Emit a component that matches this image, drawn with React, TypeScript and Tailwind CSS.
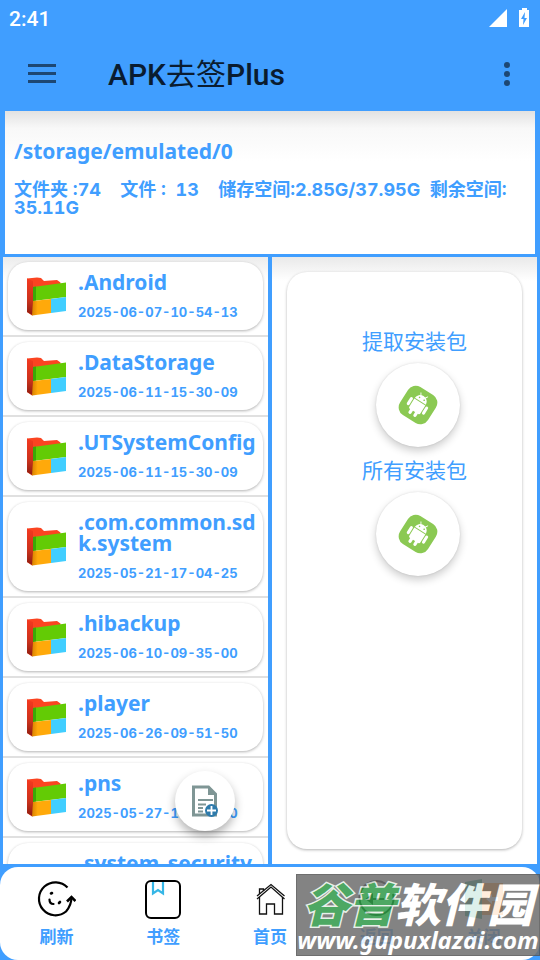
import React from "react";

const folders = [
  { name: ".Android", date: "2025-06-07-10-54-13" },
  { name: ".DataStorage", date: "2025-06-11-15-30-09" },
  { name: ".UTSystemConfig", date: "2025-06-11-15-30-09" },
  { name: ".com.common.sdk.system", date: "2025-05-21-17-04-25" },
  { name: ".hibackup", date: "2025-06-10-09-35-00" },
  { name: ".player", date: "2025-06-26-09-51-50" },
  { name: ".pns", date: "2025-05-27-10-12-00" },
  { name: ".system_security_config", date: "2025-06-07-10-54-13" },
];

function FolderIcon() {
  return (
    <svg width="40" height="40" viewBox="0 0 40 40" aria-hidden="true" className="shrink-0">
      <defs>
        <linearGradient id="spine" x1="0" y1="0" x2="0" y2="1">
          <stop offset="0" stopColor="#f5391f" />
          <stop offset="0.6" stopColor="#c9321c" />
          <stop offset="1" stopColor="#8c1c10" />
        </linearGradient>
        <linearGradient id="amber" x1="0" y1="0" x2="1" y2="0">
          <stop offset="0" stopColor="#d98200" />
          <stop offset="0.3" stopColor="#ffa90a" />
        </linearGradient>
      </defs>
      <path d="M0 1.500L10 .5l4 .5 3 3 13-1 3.500 2.500V10L7 19 5 38.500 0 35z" fill="#fb4421" />
      <path d="M0 1.500L6 4v34.500L0 35z" fill="url(#spine)" />
      <path d="M6 10L39 5.500V20L6 24z" fill="#63cb05" />
      <path d="M6 10l3-.5v14L6 24z" fill="#39a807" />
      <path d="M6 24l18-2v14L5 38.500z" fill="url(#amber)" />
      <path d="M24 22l15-2v14l-15 2z" fill="#41ceff" />
    </svg>
  );
}

function AndroidIcon() {
  return (
    <svg width="40" height="40" viewBox="0 0 40 40" aria-hidden="true">
      <g transform="rotate(32 20 20)">
        <rect x="3.500" y="3.500" width="33" height="33" rx="9" fill="#8bc953" />
        <g fill="#fff">
          <path d="M13.500 15.500a6.500 6 0 0 1 13 0z" />
          <path d="M13.500 16.500h13v9.500a1.500 1.500 0 0 1-1.500 1.500H15a1.500 1.500 0 0 1-1.500-1.500z" />
          <rect x="9.500" y="16.500" width="3" height="9" rx="1.500" />
          <rect x="27.500" y="16.500" width="3" height="9" rx="1.500" />
          <rect x="15.500" y="26" width="3.200" height="6" rx="1.500" />
          <rect x="21.300" y="26" width="3.200" height="6" rx="1.500" />
        </g>
        <path d="M16 8l1.500 2.500M24 8l-1.500 2.500" stroke="#fff" strokeWidth="0.900" strokeLinecap="round" />
        <circle cx="17.300" cy="12.700" r="0.800" fill="#8bc953" />
        <circle cx="22.700" cy="12.700" r="0.800" fill="#8bc953" />
      </g>
    </svg>
  );
}

function RefreshIcon() {
  return (
    <svg width="40" height="40" viewBox="0 0 40 40" fill="none" stroke="#000" aria-hidden="true">
      <path d="M31.500 8.500A16.500 16.500 0 1 0 30 32.500C33 29 35.500 24 35.500 18" strokeWidth="2.200" />
      <path d="M31 22.500l4.500-4.500 4 4" strokeWidth="2.600" />
      <path d="M13.500 20.500c0 3 1.500 4.500 4 4.500" strokeWidth="2.200" strokeLinecap="round" />
      <path d="M15 14.500l1-.5M23 24l1-1" strokeWidth="2.600" strokeLinecap="round" />
    </svg>
  );
}

function BookmarkIcon() {
  return (
    <svg width="40" height="40" viewBox="0 0 40 40" fill="none" aria-hidden="true">
      <path d="M10 3v11.500l5-3.500 5 3.500V3" stroke="#35b6e6" strokeWidth="2.200" />
      <rect x="3" y="2" width="34" height="37" rx="5" stroke="#000" strokeWidth="2" />
    </svg>
  );
}

function HomeIcon() {
  return (
    <svg width="40" height="40" viewBox="0 0 40 40" fill="none" stroke="#111" strokeWidth="1.300" aria-hidden="true">
      <path d="M7 20L21 8l13.500 12M7 17L21 5.500 34.500 17" />
      <path d="M9.500 18v17h7V25h8v10h8V18M9.500 15v-5h4v2" />
    </svg>
  );
}

function BackIcon() {
  return (
    <svg width="40" height="40" viewBox="0 0 40 40" fill="none" stroke="#111" strokeWidth="2" aria-hidden="true">
      <path d="M29 5A17 17 0 1 0 36 15" />
      <path d="M10 20h17M15 16l-5 4 5 4z" fill="#111" />
    </svg>
  );
}

function ExitIcon() {
  return (
    <svg width="40" height="40" viewBox="0 0 40 40" aria-hidden="true">
      <path d="M17 4h22v32H17z" fill="#ff8a1f" />
      <path d="M1 3l17-3v40L1 37z" fill="#1f9e7a" />
      <path d="M22 20l6-5v3h6v4h-6v3z" fill="#fff" />
    </svg>
  );
}

const tabs = [
  { label: "刷新", Icon: RefreshIcon },
  { label: "书签", Icon: BookmarkIcon },
  { label: "首页", Icon: HomeIcon },
  { label: "返回", Icon: BackIcon },
  { label: "关闭", Icon: ExitIcon },
];

function PackageAction({ label }: { label: string }) {
  return (
    <div className="flex flex-col items-center">
      <span id={label} className="pl-5 text-[21px] leading-[30px]">{label}</span>
      <button
        type="button"
        aria-labelledby={label}
        className="mt-[7px] mb-2 ml-[26px] flex h-[84px] w-[84px] items-center justify-center rounded-full bg-white shadow-[0_4px_8px_rgba(0,0,0,0.2),0_0_2px_rgba(0,0,0,0.12)]"
      >
        <AndroidIcon />
      </button>
    </div>
  );
}

export default function App() {
  return (
    <div className="flex h-screen flex-col bg-[#409eff] font-['Noto_Sans','Noto_Sans_CJK_SC',sans-serif] text-[#409eff]">
      <header className="shrink-0">
        <div className="flex h-9 items-center justify-between pr-[10px] pl-[9px] font-['Roboto',sans-serif] text-[21px] font-medium text-white">
          <span className="pt-[3px]">2:41</span>
          <svg width="42" height="20" viewBox="0 0 42 20" fill="#fff" aria-hidden="true">
            <path d="M1 19L19 1v18z" />
            <path d="M31 2h3V0h5v2h2v17H31z" />
            <path d="M37 4l-4 7h2.500l-.5 6 4-7h-2.500z" fill="#409eff" />
          </svg>
        </div>
        <div className="flex h-[75px] items-center px-7">
          <button type="button" aria-label="菜单" className="flex w-7 flex-col gap-[5px]">
            <span className="h-[3px] bg-[#1d4773]" />
            <span className="h-[3px] bg-[#1d4773]" />
            <span className="h-[3px] bg-[#1d4773]" />
          </button>
          <h1 className="ml-[52px] flex-1 pt-[2px] font-['Roboto','Noto_Sans_CJK_SC',sans-serif] text-[30px] font-medium text-[#0a1c30]">
            APK<span className="font-normal">去签</span>Plus
          </h1>
          <button type="button" aria-label="更多" className="flex w-[10px] flex-col items-center gap-[3px]">
            <span className="h-[6px] w-[6px] rounded-full bg-[#1d4773]" />
            <span className="h-[6px] w-[6px] rounded-full bg-[#1d4773]" />
            <span className="h-[6px] w-[6px] rounded-full bg-[#1d4773]" />
          </button>
        </div>
      </header>

      <section className="mx-[5px] h-[143px] shrink-0 bg-white bg-linear-to-b from-[#e2e2e2] via-[#f8f8f8] via-12% to-white to-35% px-[9px] pt-[26px] font-bold">
        <p className="text-[21px] leading-7">/storage/emulated/0</p>
        <p className="mt-4 font-['Inter','Noto_Sans_CJK_SC',sans-serif] text-[18px] leading-[18px] whitespace-pre-wrap tabular-nums">
          {"文件夹 :74    文件 :  13    储存空间:2.85G/37.95G  剩余空间: 35.11G"}
        </p>
      </section>

      <main className="mx-[3px] my-[3px] grid min-h-0 flex-1 grid-cols-2 grid-rows-1 gap-1">
        <div className="relative min-h-0 bg-white">
          <ul className="h-full overflow-hidden bg-linear-to-b from-[#ececec] to-white to-[24px]">
            {folders.map((f) => (
              <li key={f.name} className="border-b-2 border-[#e0e0e0] p-[5px]">
                <div className="flex items-center gap-[11px] rounded-[20px] bg-white pt-[10px] pr-[2px] pb-[9px] pl-[19px] font-bold shadow-[0_1px_3px_rgba(0,0,0,0.3)]">
                  <FolderIcon />
                  <div className="min-w-0 flex-1">
                    <p className="text-[21px] leading-[21px] break-all">{f.name}</p>
                    <p className="mt-[10px] font-['Inter',sans-serif] text-[13px] leading-[18px] tabular-nums">{f.date}</p>
                  </div>
                </div>
              </li>
            ))}
          </ul>
          <button
            type="button"
            aria-label="新建"
            className="absolute right-[33px] bottom-[33px] flex h-[60px] w-[60px] items-center justify-center rounded-full bg-white shadow-[0_5px_10px_rgba(0,0,0,0.3)]"
          >
            <svg width="30" height="34" viewBox="0 0 30 34" aria-hidden="true">
              <path d="M3.500 3h15l7 7v21h-22z" fill="#fff" stroke="#7f9695" strokeWidth="3" />
              <path d="M18 2v9h9z" fill="#7f9695" />
              <path d="M8 16h15M8 20.500h8M8 24h5M8 27.500h5" stroke="#7f9695" strokeWidth="2" />
              <circle cx="21.500" cy="26.500" r="6.500" fill="#2f7bab" />
              <path d="M21.500 22v9M17 26.500h9" stroke="#fff" strokeWidth="1.800" />
            </svg>
          </button>
        </div>

        <div className="flex min-w-0 bg-white bg-linear-to-b from-[#e9e9e9] to-white to-[24px] p-[15px]">
          <div className="flex-1 rounded-[20px] bg-white pt-[54px] shadow-[0_1px_3px_rgba(0,0,0,0.3)]">
            <PackageAction label="提取安装包" />
            <PackageAction label="所有安装包" />
          </div>
        </div>
      </main>

      <footer className="relative shrink-0">
        <nav className="flex h-[93px] rounded-[18px] bg-white px-[3px] text-[17px] font-bold">
          {tabs.map(({ label, Icon }) => (
            <button key={label} type="button" className="flex flex-1 flex-col items-center pt-3">
              <Icon />
              <span className="mt-[6px] leading-6">{label}</span>
            </button>
          ))}
        </nav>
        <div className="absolute right-0 bottom-[4px] flex h-[82px] w-[244px] flex-col items-center border border-[#555] bg-[#6e6e6e] font-bold text-white italic opacity-85">
          <p className="mt-[4px] text-[46px] leading-[50px] font-black whitespace-nowrap">
            <span className="text-[#2f9a48] [paint-order:stroke_fill] [-webkit-text-stroke:3px_#e4eee6]">谷普</span>软件园
          </p>
          <p className="text-[24px] leading-[22px]">www.gupuxlazai.com</p>
        </div>
      </footer>
    </div>
  );
}
